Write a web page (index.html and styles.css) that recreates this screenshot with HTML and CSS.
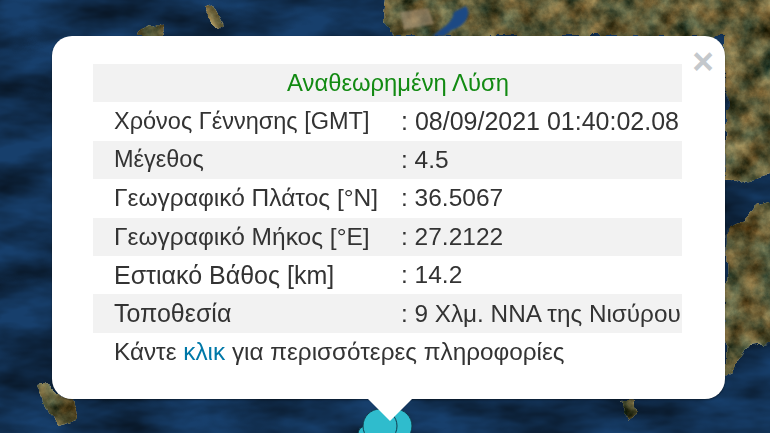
FILE: index.html
```html
<!DOCTYPE html>
<html lang="el">
<head>
<meta charset="utf-8">
<title>Αναθεωρημένη Λύση</title>
<link rel="stylesheet" href="styles.css">
</head>
<body>
<main class="map">
  <svg class="tiles" width="770" height="433" viewBox="0 0 770 433" aria-hidden="true">
    <defs>
      <filter id="landTex" x="-5%" y="-5%" width="110%" height="110%" color-interpolation-filters="sRGB">
        <feTurbulence type="fractalNoise" baseFrequency="0.05" numOctaves="5" seed="7" result="n"/>
        <feDisplacementMap in="SourceGraphic" in2="n" scale="12" xChannelSelector="R" yChannelSelector="G" result="shape"/>
        <feColorMatrix in="n" type="matrix" values="1.15 0.6 0 0 -0.3  1.15 0.25 0 0 -0.1  1.15 0 0 0 -0.1  0 0 0 0 1" result="c"/>
        <feComposite in="c" in2="shape" operator="in" result="t"/>
        <feBlend in="t" in2="shape" mode="multiply"/>
      </filter>
      <filter id="seaTex" x="0" y="0" width="100%" height="100%" color-interpolation-filters="sRGB">
        <feTurbulence type="fractalNoise" baseFrequency="0.012 0.03" numOctaves="4" seed="11" result="n"/>
        <feColorMatrix in="n" type="matrix" values="1.1 0 0 0 0.2  1.1 0 0 0 0.2  1.1 0 0 0 0.2  0 0 0 0 1" result="c"/>
        <feBlend in="c" in2="SourceGraphic" mode="multiply"/>
      </filter>
      <filter id="soft"><feGaussianBlur stdDeviation="1"/></filter>
    </defs>
    <rect width="770" height="433" fill="#173f6c" filter="url(#seaTex)"/>
    <g fill="#a39470" filter="url(#landTex)">
      <path d="M387 -12H782V172L745 180L727 183L725 36H392L384 20Z"/>
      <path d="M727 228L745 222L756 205L782 196V340L745 345L733 372L725 376Z"/>
      <path d="M37 384L52 382L62 398L72 400L75 420L60 426L48 412L42 398Z"/>
      <path d="M205 8L213 6L224 26L218 30L210 20Z"/>
      <path d="M138 30L150 23L162 28L165 36H135Z"/>
      <path d="M622 399H634L636 412L628 422L620 410Z"/>
    </g>
    <path d="M432 36C442 28 452 24 454 12L466 6C472 14 466 26 452 30L444 36Z" fill="#1b4a84" filter="url(#soft)"/>
    <path d="M400 12L428 8L434 24L404 30Z" fill="#b8a184" opacity=".55" filter="url(#soft)"/>
    <g stroke="#123a4c" stroke-width="1" fill="#2fbccd">
      <circle cx="366" cy="434" r="8"/>
      <circle cx="395" cy="426" r="17"/>
      <circle cx="380" cy="426" r="17"/>
    </g>
  </svg>

  <section class="popup">
    <button class="close" type="button">×</button>
    <table class="quake">
      <colgroup><col class="label-col"><col class="value-col"></colgroup>
      <tr><th colspan="2">Αναθεωρημένη Λύση</th></tr>
      <tr><td class="tight">Χρόνος Γέννησης [GMT]</td><td class="wide">: 08/09/2021 01:40:02.08</td></tr>
      <tr><td class="tight">Μέγεθος</td><td>: 4.5</td></tr>
      <tr><td>Γεωγραφικό Πλάτος [°N]</td><td>: 36.5067</td></tr>
      <tr><td>Γεωγραφικό Μήκος [°E]</td><td>: 27.2122</td></tr>
      <tr><td class="wide">Εστιακό Βάθος [km]</td><td>: 14.2</td></tr>
      <tr><td class="wide">Τοποθεσία</td><td class="snug">: 9 Χλμ. ΝΝΑ της Νισύρου</td></tr>
      <tr><td colspan="2" class="snug">Κάντε <a href="#">κλικ</a> για περισσότερες πληροφορίες</td></tr>
    </table>
    <div class="tip"></div>
  </section>
</main>
</body>
</html>
```
FILE: styles.css
```css
* { box-sizing: border-box; }
html, body { margin: 0; padding: 0; }
body { font-family: "Liberation Sans", Arial, sans-serif; background: #173f6c; }
.map { position: relative; width: 770px; height: 433px; overflow: hidden; }
.tiles { position: absolute; left: 0; top: 0; display: block; filter: blur(.6px); }
.popup {
  position: absolute; left: 52px; top: 36px; width: 673px; height: 363px;
  padding: 28px 43px 0 41px;
  background: #fff; border-radius: 20px;
  box-shadow: 0 1px 2px rgba(0, 0, 0, .45);
}
.close {
  position: absolute; right: 8px; top: 7px; width: 28px; height: 38px; padding: 0;
  border: 0; background: none; color: #c4c8cc;
  font: bold 37px/38px "Liberation Sans", Arial, sans-serif; text-align: center;
}
.quake {
  width: 589px; border-collapse: collapse; table-layout: fixed;
  font-size: 24.5px; color: #333; filter: blur(.35px);
}
.label-col { width: 308px; }
.value-col { width: 281px; }
.quake tr { height: 38.4px; }
.quake tr:nth-child(odd) { background: #f2f2f2; }
.quake tr:nth-child(even), .quake tr:last-child { background: #fff; }
.quake tr:first-child { background: #f2f2f2; }
.quake th { padding: 0 0 0 21px; font-weight: normal; font-size: 23.8px; color: #128a12; text-align: center; }
.quake td { padding: 0; white-space: nowrap; }
.quake td:first-child { padding-left: 21px; }
.quake td.tight { font-size: 23.5px; }
.quake td.wide { font-size: 25px; }
.quake td.snug { font-size: 24.3px; }
.quake a { color: #0078a8; text-decoration: none; }
.tip {
  position: absolute; left: 316px; top: 363px; width: 44px; height: 22px;
  background: #fff; clip-path: polygon(0 0, 100% 0, 50% 100%);
}
```
